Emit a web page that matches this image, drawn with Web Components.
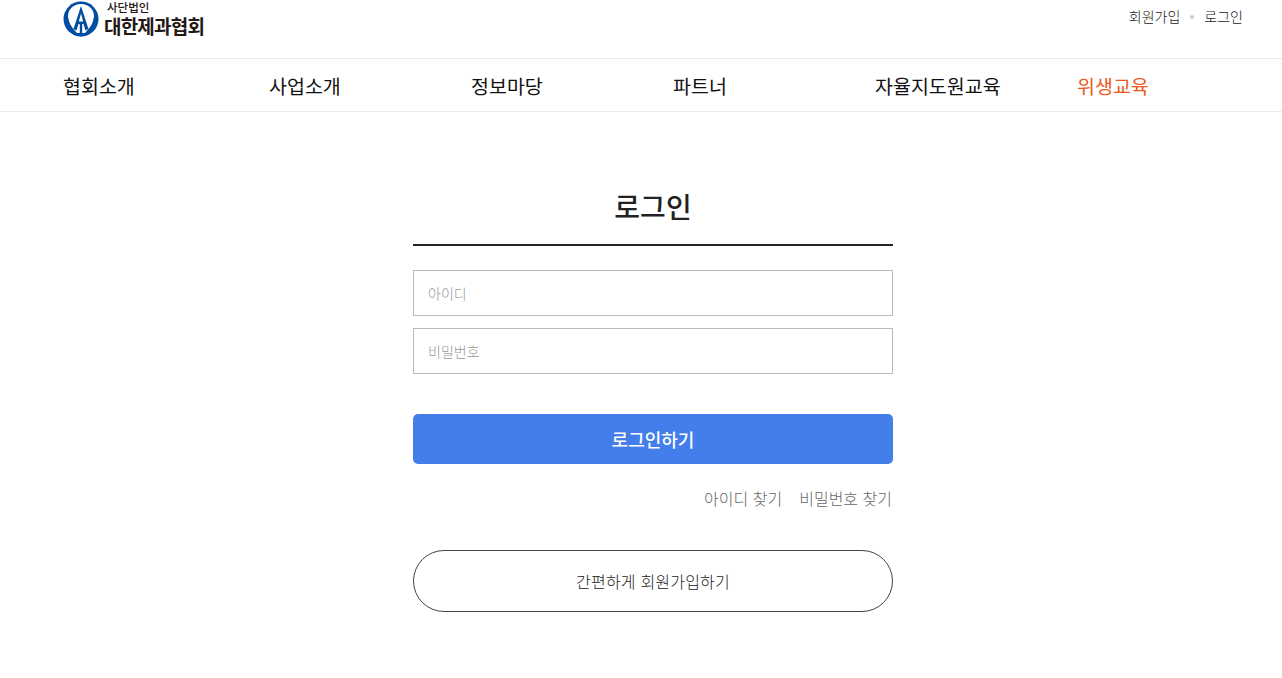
<!DOCTYPE html>
<html lang="ko">
<head>
    <meta charset="UTF-8">
    <title>로그인</title>
    <style>
        html, body {margin: 0; padding: 0; background: #fff;}
        body {font-family: "Noto Sans CJK KR", "Noto Sans", sans-serif; overflow: hidden;}
    </style>
    <script>
        "use strict";

        class SiteHeader extends HTMLElement {
            constructor() {
                super();
                const s = this.attachShadow({mode: "open"});
                s.innerHTML = `<style>
                    :host {display: flex; justify-content: space-between; height: 58px; padding: 0 39px 0 63px; box-sizing: border-box;}
                    .logo {display: flex; height: 38px; color: #231815;}
                    svg {width: 36px; height: 38px; flex: none;}
                    .names {display: flex; flex-direction: column; margin-left: 6px;}
                    .small {font-size: 11.5px; line-height: 13px; margin: 1px 0 0 2px; font-weight: 500;}
                    .big {font-size: 19px; line-height: 22px; font-weight: 700; letter-spacing: -0.8px; margin-top: 1px; margin-left: -1px;}
                    .util {display: flex; align-items: center; height: 32px; font-size: 14px; color: #222; font-weight: 300;}
                    .dot {width: 4px; height: 4px; border-radius: 50%; background: #ccc; margin: 2px 10px 0;}
                </style>
                <div class="logo">
                    <svg viewBox="0 0 36 38">
                        <circle cx="18" cy="19" r="17.5" fill="#004ea2"/>
                        <path d="M18 4 C10 4 5 10 5 16 C5 22 9 28 14 33 L22 33 C27 28 31 22 31 16 C31 10 26 4 18 4 Z" fill="#fff"/>
                        <path d="M5 17 C6 25 10 31 15 36 L10 34 C6 30 4 24 5 17 Z M31 17 C30 25 26 31 21 36 L26 34 C30 30 32 24 31 17 Z" fill="#004ea2"/>
                        <path d="M18 6 L10.5 29 L13.5 30.5 L15.5 24 L16.8 24 L16.8 36.5 L19.2 36.5 L19.2 24 L20.5 24 L22.5 30.5 L25.5 29 Z" fill="#004ea2"/>
                        <path d="M18 13.5 L15.8 21.5 L20.2 21.5 Z" fill="#fff"/>
                    </svg>
                    <div class="names"><span class="small">사단법인</span><span class="big">대한제과협회</span></div>
                </div>
                <div class="util"><span>회원가입</span><i class="dot"></i><span>로그인</span></div>`;
            }
        }

        class NavBar extends HTMLElement {
            constructor() {
                super();
                const s = this.attachShadow({mode: "open"});
                s.innerHTML = `<style>
                    :host {display: block; height: 54px; box-sizing: border-box; border-top: 1px solid #eaeaea; border-bottom: 1px solid #eaeaea;}
                    nav {display: grid; grid-template-columns: 206px 202px 202px 202px 202px 1fr; padding-left: 63px; height: 52px; align-items: center; font-size: 19.5px; color: #111;}
                    .on {color: #eb5a1e;}
                </style>
                <nav>
                    <span>협회소개</span><span>사업소개</span><span>정보마당</span><span>파트너</span><span>자율지도원교육</span><span class="on">위생교육</span>
                </nav>`;
            }
        }

        class TextField extends HTMLElement {
            constructor() {
                super();
                const s = this.attachShadow({mode: "open"});
                s.innerHTML = `<style>
                    :host {display: block; height: 46px; box-sizing: border-box; border: 1px solid #bbb; padding: 0 14px; font-size: 14px; line-height: 45px; color: #999; font-weight: 300;}
                </style><slot></slot>`;
            }
        }

        class LoginForm extends HTMLElement {
            constructor() {
                super();
                const s = this.attachShadow({mode: "open"});
                s.innerHTML = `<style>
                    :host {display: flex; flex-direction: column; width: 480px; margin: 0 auto; padding-top: 71px; position: relative; left: 12px;}
                    h1 {margin: 0; height: 63px; box-sizing: border-box; border-bottom: 2px solid #222; text-align: center; font-size: 28px; line-height: 46px; font-weight: 500; color: #222;}
                    .fields {display: flex; flex-direction: column; gap: 12px; margin-top: 24px;}
                    .submit {height: 50px; margin-top: 40px; border-radius: 5px; background: #437eeb; color: #fff; text-align: center; font-size: 18px; line-height: 50px; font-weight: 500;}
                    .links {display: flex; justify-content: flex-end; gap: 17px; margin-top: 22px; padding-right: 1px; font-size: 16px; line-height: 24px; color: #666; font-weight: 300;}
                    .join {height: 62px; box-sizing: border-box; margin-top: 40px; border: 1px solid #444; border-radius: 31px; text-align: center; font-size: 16px; line-height: 60px; color: #222; font-weight: 300; letter-spacing: 0.2px;}
                </style>
                <h1>로그인</h1>
                <div class="fields">
                    <text-field>아이디</text-field>
                    <text-field>비밀번호</text-field>
                </div>
                <div class="submit">로그인하기</div>
                <div class="links"><span>아이디 찾기</span><span>비밀번호 찾기</span></div>
                <div class="join">간편하게 회원가입하기</div>`;
            }
        }

        customElements.define("site-header", SiteHeader);
        customElements.define("nav-bar", NavBar);
        customElements.define("text-field", TextField);
        customElements.define("login-form", LoginForm);
    </script>
</head>
<body>
<site-header></site-header>
<nav-bar></nav-bar>
<login-form></login-form>
</body>
</html>
